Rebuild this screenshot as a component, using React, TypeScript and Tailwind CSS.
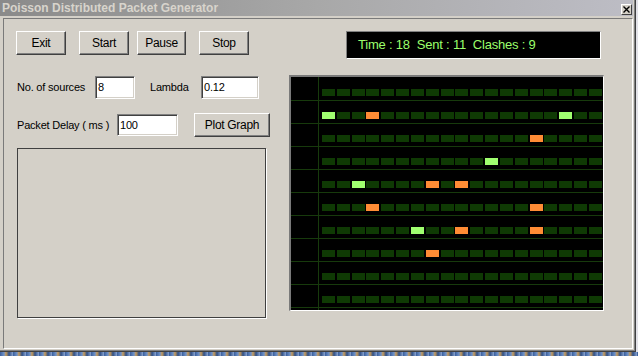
import React from 'react';

// packet grid state: row index -> { cell index: colour }
const packets: Record<number, Record<number, 'g' | 'o'>> = {
  1: { 0: 'g', 3: 'o', 16: 'g' },
  2: { 14: 'o' },
  3: { 11: 'g' },
  4: { 2: 'g', 7: 'o', 9: 'o' },
  5: { 3: 'o', 14: 'o' },
  6: { 6: 'g', 9: 'o', 14: 'o' },
  7: { 7: 'o' },
};

const COLS = 19;
const ROWS = 10;

function WinButton({ label, className }: { label: string; className?: string }) {
  return (
    <button
      className={`h-[24px] bg-[#d4d0c8] border-t border-l border-t-white border-l-white border-b border-r border-b-[#404040] border-r-[#404040] shadow-[inset_-1px_-1px_0_#808080] text-[12px] tracking-[-0.3px] text-black leading-none ${className ?? ''}`}
    >
      {label}
    </button>
  );
}

function Field({ value, className }: { value: string; className?: string }) {
  return (
    <div
      className={`bg-white border-t border-l border-t-[#808080] border-l-[#808080] border-b border-r border-b-white border-r-white shadow-[inset_1px_1px_0_#404040,inset_-1px_-1px_0_#d4d0c8] pl-[2px] flex items-center text-[11px] text-black ${className ?? ''}`}
    >
      {value}
    </div>
  );
}

function GridRow({ index }: { index: number }) {
  const row = packets[index] ?? {};
  return (
    <div className="flex flex-col">
      <div className={`flex ${index === 0 ? 'h-[23px]' : 'h-[22px]'}`}>
        <div className="w-[27px]" />
        <div className="w-px bg-[#173a0c]" />
        <div className="flex gap-[1.83px] pl-[3px] pb-[4px] self-end">
          {Array.from({ length: COLS }).map((_, i) => {
            const c = row[i];
            const bg = c === 'g' ? 'bg-[#a0ff70]' : c === 'o' ? 'bg-[#ff8c35]' : 'bg-[#0f3a04]';
            return <div key={i} className={`w-[13px] h-[7px] shrink-0 ${bg}`} />;
          })}
        </div>
      </div>
      <div className="h-px bg-[#173a0c]" />
    </div>
  );
}

export default function App() {
  return (
    <div className="w-[638px] h-[356px] flex flex-col bg-[#e2e2e8] overflow-hidden font-['Liberation_Sans',Arial,sans-serif]">
      <div className="w-[636px] h-[352px] shrink-0 flex flex-col bg-[#d4d0c8] border-r border-b border-[#404040] shadow-[inset_-1px_-1px_0_#808080]">
        {/* title bar */}
        <div className="w-[633px] h-[16px] flex items-center justify-between pl-[2px] bg-[linear-gradient(90deg,#8a8a8a,#a8a8a8_50%,#bdbdc5)]">
          <span className="text-[12px] font-bold text-[#d8d4cc] leading-none">Poisson Distributed Packet Generator</span>
          <div className="self-start mt-[4px] mr-[1px] w-[11px] h-[11px] bg-[#d4d0c8] border-t border-l border-white border-b border-r border-b-[#404040] border-r-[#404040] flex items-center justify-center">
            <svg width="7" height="7" viewBox="0 0 7 7">
              <path d="M0.5 0.5 L6.5 6.5 M6.5 0.5 L0.5 6.5" stroke="#000" strokeWidth="1.4" />
            </svg>
          </div>
        </div>

        {/* client area */}
        <div className="mt-[2px] ml-[3px] w-[630px] h-[331px] border-t border-l border-[#7a7a7a] border-b border-r border-b-white border-r-white flex">
          {/* left column */}
          <div className="w-[285px] pl-[12px] pt-[12px] flex flex-col">
            <div className="flex">
              <WinButton label="Exit" className="w-[50px]" />
              <WinButton label="Start" className="w-[50px] ml-[13px]" />
              <WinButton label="Pause" className="w-[49px] ml-[8px]" />
              <WinButton label="Stop" className="w-[50px] ml-[13px]" />
            </div>

            <div className="flex items-center mt-[21px] text-[11px] tracking-[-0.2px] text-black">
              <span className="ml-[1px] w-[78px]">No. of sources</span>
              <Field value="8" className="w-[40px] h-[23px]" />
              <span className="ml-[15px] w-[51px]">Lambda</span>
              <Field value="0.12" className="w-[58px] h-[23px]" />
            </div>

            <div className="flex items-center mt-[14px] text-[11px] tracking-[-0.2px] text-black">
              <span className="ml-[1px] w-[100px]">Packet Delay ( ms )</span>
              <Field value="100" className="w-[61px] h-[22px]" />
              <WinButton label="Plot Graph" className="w-[76px] ml-[16px]" />
            </div>

            <div className="mt-[11px] ml-[1px] w-[249px] h-[170px] border border-[#404040] shadow-[1px_1px_0_#ffffff]" />
          </div>

          {/* right column */}
          <div className="pt-[12px] flex flex-col">
            <div className="ml-[57px] w-[255px] h-[28px] bg-black border-t border-l border-[#808080] border-b border-r border-b-white border-r-white flex items-center pl-[11px] text-[13px] tracking-[-0.2px] text-[#9cff6c] whitespace-pre">
              {'Time : 18  Sent : 11  Clashes : 9'}
            </div>

            <div className="mt-[16px] w-[315px] h-[236px] border-t-2 border-l-2 border-[#7a7a7a] border-b border-r border-b-white border-r-white">
              <div className="w-[312px] h-[233px] bg-black overflow-hidden flex flex-col">
                {Array.from({ length: ROWS }).map((_, i) => (
                  <GridRow key={i} index={i} />
                ))}
                <div className="flex flex-1">
                  <div className="w-[27px]" />
                  <div className="w-px bg-[#173a0c]" />
                </div>
              </div>
            </div>
          </div>
        </div>
      </div>
      <div className="h-[4px] w-full bg-[repeating-linear-gradient(90deg,#3b5f9c_0px,#6f92c8_4px,#c79a58_6px,#2f4f86_9px,#8aa4d0_13px)]" />
    </div>
  );
}
